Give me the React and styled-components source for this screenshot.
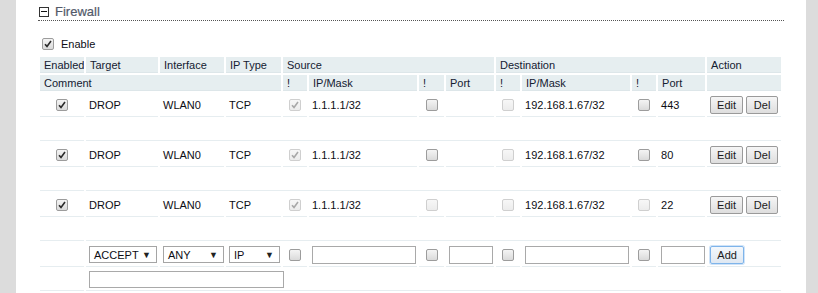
import React from 'react'
import styled, { createGlobalStyle, css } from 'styled-components'

const GlobalStyle = createGlobalStyle`
  html, body {
    margin: 0;
    padding: 0;
    background: #dcdcdc;
  }
  body {
    font-family: "Liberation Sans", Arial, sans-serif;
    font-size: 11px;
    color: #0d0d14;
  }
`

const Page = styled.div`
  margin-left: 16px;
  width: 790px;
  min-height: 293px;
  background: #fff;
  padding: 0 22px;
  box-sizing: border-box;
`

const Heading = styled.div`
  display: flex;
  align-items: center;
  gap: 6px;
  height: 20px;
  padding-left: 1px;
  border-bottom: 1px dotted #555;
`

const Toggle = styled.span`
  position: relative;
  width: 10px;
  height: 10px;
  box-sizing: border-box;
  border: 1px solid #333;
  background: #fff;
  margin-top: 3px;

  &::after {
    content: '';
    position: absolute;
    left: 1px;
    right: 1px;
    top: 3px;
    height: 1px;
    background: #111;
  }
`

const Title = styled.span`
  font-size: 13px;
  color: #535a6a;
  margin-top: 3px;
  -webkit-text-stroke: 0.2px #535a6a;
`

const EnableRow = styled.div`
  display: flex;
  align-items: center;
  gap: 7px;
  height: 16px;
  margin: 15px 0 3px 4px;
  font-size: 11px;
`

const Table = styled.table`
  table-layout: fixed;
  width: 745px;
  border-collapse: separate;
  border-spacing: 2px;
`

const Col = styled.col`
  width: ${p => p.$w}px;
`

const HeadCell = styled.th`
  height: 16px;
  padding: 0 4px;
  box-sizing: border-box;
  background: #e6eef0;
  border-bottom: 1px solid #dde6e9;
  font-weight: normal;
  text-align: left;
  color: #142030;
  white-space: nowrap;
  overflow: hidden;
`

const Cell = styled.td`
  height: ${p => (p.$comment ? 22 : 24)}px;
  padding: 0 3px;
  box-sizing: border-box;
  border-bottom: 1px solid #e6edf0;
  white-space: nowrap;
  vertical-align: middle;
  ${p =>
    p.$center &&
    css`
      text-align: center;
      padding: 0;
    `}
`

const CheckBox = styled.span`
  display: inline-flex;
  align-items: center;
  justify-content: center;
  vertical-align: middle;
  width: 12px;
  height: 12px;
  box-sizing: border-box;
  border-radius: 2px;
  border: 1px solid ${p => (p.$disabled ? '#cfcfcf' : '#9c9c9c')};
  background: ${p =>
    p.$disabled
      ? 'linear-gradient(#f7f7f7, #ececec)'
      : 'linear-gradient(#f4f4f4, #dadada)'};

  svg {
    display: block;
  }
`

function Check({ checked, disabled }) {
  return (
    <CheckBox $disabled={disabled}>
      {checked && (
        <svg width="8" height="8" viewBox="0 0 8 8">
          <path
            d="M1 4.2 L3 6.4 L7 1"
            fill="none"
            stroke={disabled ? '#a8a8a8' : '#2a2a2a'}
            strokeWidth="1.6"
          />
        </svg>
      )}
    </CheckBox>
  )
}

const Button = styled.button`
  height: 18px;
  padding: 0;
  width: ${p => p.$w}px;
  margin-right: 3px;
  font-family: "Liberation Sans", Arial, sans-serif;
  font-size: 11px;
  color: #1a1a1a;
  border: 1px solid ${p => (p.$focus ? '#7eb4ea' : '#9a9a9a')};
  border-radius: 2px;
  background: ${p =>
    p.$focus
      ? 'linear-gradient(#f4f8fc, #dfe8f2)'
      : 'linear-gradient(#f6f6f6, #dedede)'};
  box-shadow: ${p => (p.$focus ? '0 0 0 1px #cfe3f8' : 'none')};
  vertical-align: middle;
`

const Select = styled.div`
  display: inline-flex;
  align-items: center;
  justify-content: space-between;
  vertical-align: middle;
  width: ${p => p.$w}px;
  height: 17px;
  box-sizing: border-box;
  padding: 0 5px 0 4px;
  border: 1px solid #a5a5a5;
  font-size: 11px;
  color: #0d0d14;

  &::after {
    content: '▼';
    font-size: 9px;
    color: #222;
  }
`

const TextInput = styled.div`
  display: inline-block;
  vertical-align: middle;
  width: ${p => p.$w}px;
  height: ${p => p.$h || 18}px;
  box-sizing: border-box;
  border: 1px solid #a9a9a9;
  background: #fff;
`

const rules = [
  { target: 'DROP', iface: 'WLAN0', type: 'TCP', src: '1.1.1.1/32', dst: '192.168.1.67/32', port: '443', srcPortOff: false, dstPortOff: false },
  { target: 'DROP', iface: 'WLAN0', type: 'TCP', src: '1.1.1.1/32', dst: '192.168.1.67/32', port: '80', srcPortOff: false, dstPortOff: false },
  { target: 'DROP', iface: 'WLAN0', type: 'TCP', src: '1.1.1.1/32', dst: '192.168.1.67/32', port: '22', srcPortOff: true, dstPortOff: true }
]

const widths = [44, 72, 64, 55, 24, 108, 25, 48, 24, 108, 24, 47, 74]

export default function App() {
  return (
    <>
      <GlobalStyle />
      <Page>
        <Heading>
          <Toggle />
          <Title>Firewall</Title>
        </Heading>

        <EnableRow>
          <Check checked />
          <span>Enable</span>
        </EnableRow>

        <Table>
          <colgroup>
            {widths.map((w, i) => (
              <Col key={i} $w={w} />
            ))}
          </colgroup>
          <thead>
            <tr>
              <HeadCell>Enabled</HeadCell>
              <HeadCell>Target</HeadCell>
              <HeadCell>Interface</HeadCell>
              <HeadCell>IP Type</HeadCell>
              <HeadCell colSpan={4}>Source</HeadCell>
              <HeadCell colSpan={4}>Destination</HeadCell>
              <HeadCell>Action</HeadCell>
            </tr>
            <tr>
              <HeadCell colSpan={4}>Comment</HeadCell>
              <HeadCell>!</HeadCell>
              <HeadCell>IP/Mask</HeadCell>
              <HeadCell>!</HeadCell>
              <HeadCell>Port</HeadCell>
              <HeadCell>!</HeadCell>
              <HeadCell>IP/Mask</HeadCell>
              <HeadCell>!</HeadCell>
              <HeadCell>Port</HeadCell>
              <HeadCell></HeadCell>
            </tr>
          </thead>
          <tbody>
            {rules.map((rule, index) => (
              <React.Fragment key={index}>
                <tr>
                  <Cell $center>
                    <Check checked />
                  </Cell>
                  <Cell>{rule.target}</Cell>
                  <Cell>{rule.iface}</Cell>
                  <Cell>{rule.type}</Cell>
                  <Cell $center>
                    <Check checked disabled />
                  </Cell>
                  <Cell>{rule.src}</Cell>
                  <Cell $center>
                    <Check disabled={rule.srcPortOff} />
                  </Cell>
                  <Cell></Cell>
                  <Cell $center>
                    <Check disabled />
                  </Cell>
                  <Cell>{rule.dst}</Cell>
                  <Cell $center>
                    <Check disabled={rule.dstPortOff} />
                  </Cell>
                  <Cell>{rule.port}</Cell>
                  <Cell>
                    <Button $w={33}>Edit</Button>
                    <Button $w={32}>Del</Button>
                  </Cell>
                </tr>
                <tr>
                  <Cell $comment></Cell>
                  <Cell $comment colSpan={12}></Cell>
                </tr>
              </React.Fragment>
            ))}
            <tr>
              <Cell></Cell>
              <Cell>
                <Select $w={68}>ACCEPT</Select>
              </Cell>
              <Cell>
                <Select $w={61}>ANY</Select>
              </Cell>
              <Cell>
                <Select $w={51}>IP</Select>
              </Cell>
              <Cell $center>
                <Check />
              </Cell>
              <Cell>
                <TextInput $w={104} />
              </Cell>
              <Cell $center>
                <Check />
              </Cell>
              <Cell>
                <TextInput $w={44} />
              </Cell>
              <Cell $center>
                <Check />
              </Cell>
              <Cell>
                <TextInput $w={104} />
              </Cell>
              <Cell $center>
                <Check />
              </Cell>
              <Cell>
                <TextInput $w={44} />
              </Cell>
              <Cell>
                <Button $w={34} $focus>
                  Add
                </Button>
              </Cell>
            </tr>
            <tr>
              <Cell $comment></Cell>
              <Cell $comment colSpan={12}>
                <TextInput $w={195} $h={17} />
              </Cell>
            </tr>
          </tbody>
        </Table>
      </Page>
    </>
  )
}
